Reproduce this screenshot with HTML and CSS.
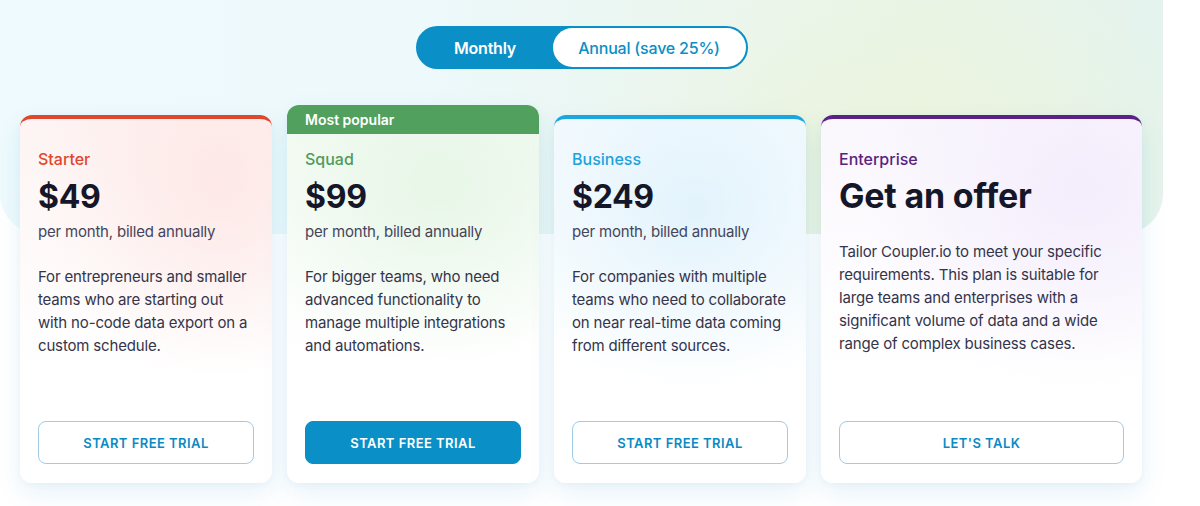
FILE: index.html
```html
<!DOCTYPE html>
<html lang="en">
<head>
<meta charset="utf-8">
<title>Pricing</title>
<link rel="stylesheet" href="styles.css">
</head>
<body>
<div class="page">
  <section class="hero">
    <div class="toggle">
      <span class="toggle-opt active">Monthly</span>
      <span class="toggle-opt">Annual (save 25%)</span>
    </div>
  </section>

  <div class="plans">
    <article class="card starter">
      <h3 class="plan-name">Starter</h3>
      <div class="price">$49</div>
      <p class="billing">per month, billed annually</p>
      <p class="desc">For entrepreneurs and smaller teams who are starting out with no-code data export on a custom schedule.</p>
      <a class="btn">START FREE TRIAL</a>
    </article>

    <article class="card squad">
      <div class="tag">Most popular</div>
      <h3 class="plan-name">Squad</h3>
      <div class="price">$99</div>
      <p class="billing">per month, billed annually</p>
      <p class="desc">For bigger teams, who need advanced functionality to manage multiple integrations and automations.</p>
      <a class="btn primary">START FREE TRIAL</a>
    </article>

    <article class="card business">
      <h3 class="plan-name">Business</h3>
      <div class="price">$249</div>
      <p class="billing">per month, billed annually</p>
      <p class="desc">For companies with multiple teams who need to collaborate on near real-time data coming from different sources.</p>
      <a class="btn">START FREE TRIAL</a>
    </article>

    <article class="card enterprise">
      <h3 class="plan-name">Enterprise</h3>
      <div class="price offer">Get an offer</div>
      <p class="desc">Tailor Coupler.io to meet your specific requirements. This plan is suitable for large teams and enterprises with a significant volume of data and a wide range of complex business cases.</p>
      <a class="btn">LET'S TALK</a>
    </article>
  </div>
</div>
</body>
</html>
```

FILE: styles.css
```css
* { box-sizing: border-box; }

html, body {
  margin: 0;
  padding: 0;
  background: #ffffff;
}

body {
  font-family: Inter, "Noto Sans", "Liberation Sans", sans-serif;
  color: #161629;
  width: 1200px;
  height: 506px;
  overflow: hidden;
}

.page {
  width: 1163px;
}

.hero {
  height: 234px;
  border-radius: 0 0 40px 40px;
  background:
    radial-gradient(ellipse 320px 200px at 900px 160px, rgba(236, 244, 220, 0.9), rgba(236, 244, 220, 0) 100%),
    linear-gradient(90deg, #eefafd 0%, #edf9fb 35%, #ebf6ef 60%, #eaf4e6 80%, #e4f3ee 100%);
  display: flex;
  justify-content: center;
  padding-top: 26px;
}

.toggle {
  display: flex;
  height: 43px;
  border: 2px solid #0a8fc6;
  border-radius: 22px;
  background: #0a8fc6;
  font-size: 16px;
  letter-spacing: -0.2px;
}

.toggle-opt {
  display: flex;
  align-items: center;
  justify-content: center;
  border-radius: 20px;
  font-weight: 500;
}

.toggle-opt.active {
  width: 135px;
  color: #ffffff;
  font-weight: 600;
}

.toggle-opt:not(.active) {
  width: 193px;
  background: #ffffff;
  color: #0a8fc6;
}

.plans {
  margin-top: -129px;
  padding: 10px 0 0 20px;
  display: grid;
  grid-template-columns: 252px 252px 252px 321px;
  column-gap: 15px;
  height: 378px;
}

.card {
  position: relative;
  display: flex;
  flex-direction: column;
  background: #ffffff;
  border-radius: 12px;
  border-top: 4px solid;
  padding: 28px 18px 19px;
  box-shadow: 0 10px 26px rgba(20, 140, 200, 0.10), 0 2px 6px rgba(20, 140, 200, 0.05);
}

.starter {
  border-top-color: #e0472d;
  background:
    radial-gradient(ellipse 180px 200px at 200px 60px, rgba(253, 230, 228, 0.85), rgba(253, 230, 228, 0) 100%),
    linear-gradient(180deg, #fdf4f3 0%, #ffffff 70%);
}

.squad {
  margin-top: -10px;
  border-top: 0;
  padding-top: 16px;
  background:
    radial-gradient(ellipse 200px 180px at 150px 80px, rgba(228, 245, 228, 0.85), rgba(228, 245, 228, 0) 100%),
    linear-gradient(180deg, #f4fbf4 0%, #ffffff 70%);
}

.business {
  border-top-color: #1aa6e0;
  background:
    radial-gradient(ellipse 200px 180px at 140px 90px, rgba(224, 242, 252, 0.9), rgba(224, 242, 252, 0) 100%),
    linear-gradient(180deg, #f5fbfe 0%, #ffffff 70%);
}

.enterprise {
  border-top-color: #5b2285;
  background:
    radial-gradient(ellipse 220px 200px at 260px 70px, rgba(243, 236, 252, 0.9), rgba(243, 236, 252, 0) 100%),
    linear-gradient(180deg, #faf7fd 0%, #ffffff 70%);
}

.tag {
  margin: -16px -18px 13px;
  height: 29px;
  padding: 0 18px;
  display: flex;
  align-items: center;
  background: #52a05d;
  color: #ffffff;
  font-size: 14px;
  font-weight: 600;
  border-radius: 12px 12px 0 0;
}

.plan-name {
  margin: 0;
  font-size: 16px;
  line-height: 24px;
  font-weight: 500;
}

.starter .plan-name { color: #e0472d; }
.squad .plan-name { color: #4f9b5b; }
.business .plan-name { color: #1ea2dc; }
.enterprise .plan-name { color: #58237f; }

.price {
  margin-top: 6px;
  font-size: 32px;
  line-height: 40px;
  font-weight: 700;
  color: #161629;
  letter-spacing: -0.3px;
}

.price.offer {
  margin-top: 5px;
  font-size: 34px;
  letter-spacing: -0.2px;
}

.billing {
  margin: 3px 0 0;
  font-size: 15px;
  line-height: 23px;
  color: #45455a;
  letter-spacing: -0.2px;
}

.desc {
  margin: 22px 0 0;
  font-size: 15px;
  line-height: 23px;
  color: #34344a;
  letter-spacing: -0.16px;
}

.enterprise .desc {
  margin-top: 24px;
}

.btn {
  margin-top: auto;
  height: 43px;
  display: flex;
  align-items: center;
  justify-content: center;
  border: 1px solid #9fcbe7;
  border-radius: 8px;
  background: #ffffff;
  color: #0a8ac4;
  font-size: 13px;
  font-weight: 600;
  letter-spacing: 0.45px;
}

.btn.primary {
  background: #0a8fc6;
  border-color: #0a8fc6;
  color: #ffffff;
}
```
